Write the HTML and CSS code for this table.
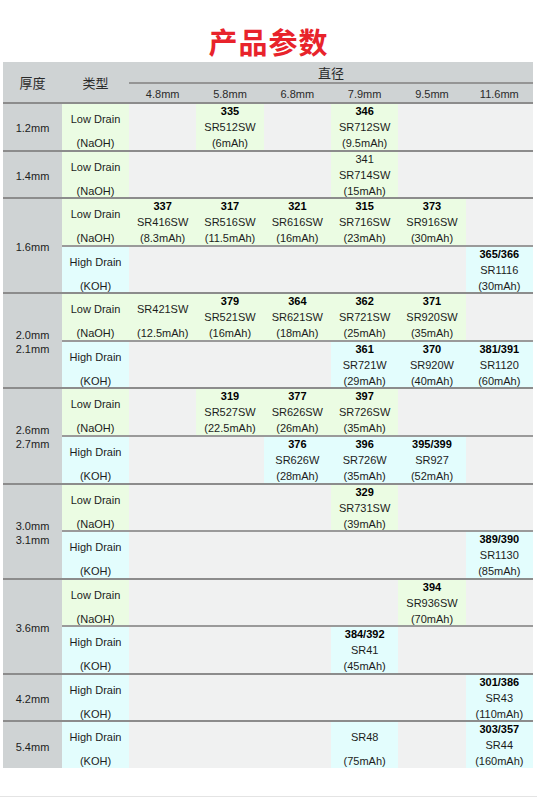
FILE: index.html
```html
<!DOCTYPE html>
<html lang="zh">
<head>
<meta charset="utf-8">
<title>产品参数</title>
<link rel="stylesheet" href="styles.css">
</head>
<body>
<h1 class="title">产品参数</h1>
<div class="grid">
  <div class="h h-thick">厚度</div>
  <div class="h h-type">类型</div>
  <div class="h h-dia">直径</div>
  <div class="h sub">4.8mm</div>
  <div class="h sub">5.8mm</div>
  <div class="h sub">6.8mm</div>
  <div class="h sub">7.9mm</div>
  <div class="h sub">9.5mm</div>
  <div class="h sub">11.6mm</div>

  <!-- 1.2mm -->
  <div class="th r1"><span>1.2mm</span></div>
  <div class="c type low"><div class="two"><span>Low Drain</span><span>(NaOH)</span></div></div>
  <div class="c"></div>
  <div class="c low"><div class="three"><b>335</b><span>SR512SW</span><span>(6mAh)</span></div></div>
  <div class="c"></div>
  <div class="c low"><div class="three"><b>346</b><span>SR712SW</span><span>(9.5mAh)</span></div></div>
  <div class="c"></div>
  <div class="c"></div>

  <!-- 1.4mm -->
  <div class="th r1"><span>1.4mm</span></div>
  <div class="c type low"><div class="two"><span>Low Drain</span><span>(NaOH)</span></div></div>
  <div class="c"></div>
  <div class="c"></div>
  <div class="c"></div>
  <div class="c low"><div class="three"><span>341</span><span>SR714SW</span><span>(15mAh)</span></div></div>
  <div class="c"></div>
  <div class="c"></div>

  <!-- 1.6mm -->
  <div class="th r2"><span>1.6mm</span></div>
  <div class="c type low"><div class="two"><span>Low Drain</span><span>(NaOH)</span></div></div>
  <div class="c low"><div class="three"><b>337</b><span>SR416SW</span><span>(8.3mAh)</span></div></div>
  <div class="c low"><div class="three"><b>317</b><span>SR516SW</span><span>(11.5mAh)</span></div></div>
  <div class="c low"><div class="three"><b>321</b><span>SR616SW</span><span>(16mAh)</span></div></div>
  <div class="c low"><div class="three"><b>315</b><span>SR716SW</span><span>(23mAh)</span></div></div>
  <div class="c low"><div class="three"><b>373</b><span>SR916SW</span><span>(30mAh)</span></div></div>
  <div class="c"></div>
  <div class="c sr type high"><div class="two"><span>High Drain</span><span>(KOH)</span></div></div>
  <div class="c sr"></div>
  <div class="c sr"></div>
  <div class="c sr"></div>
  <div class="c sr"></div>
  <div class="c sr"></div>
  <div class="c sr high"><div class="three"><b>365/366</b><span>SR1116</span><span>(30mAh)</span></div></div>

  <!-- 2.0/2.1mm -->
  <div class="th r2"><span>2.0mm<br>2.1mm</span></div>
  <div class="c type low"><div class="two"><span>Low Drain</span><span>(NaOH)</span></div></div>
  <div class="c low"><div class="two"><span>SR421SW</span><span>(12.5mAh)</span></div></div>
  <div class="c low"><div class="three"><b>379</b><span>SR521SW</span><span>(16mAh)</span></div></div>
  <div class="c low"><div class="three"><b>364</b><span>SR621SW</span><span>(18mAh)</span></div></div>
  <div class="c low"><div class="three"><b>362</b><span>SR721SW</span><span>(25mAh)</span></div></div>
  <div class="c low"><div class="three"><b>371</b><span>SR920SW</span><span>(35mAh)</span></div></div>
  <div class="c"></div>
  <div class="c sr type high"><div class="two"><span>High Drain</span><span>(KOH)</span></div></div>
  <div class="c sr"></div>
  <div class="c sr"></div>
  <div class="c sr"></div>
  <div class="c sr high"><div class="three"><b>361</b><span>SR721W</span><span>(29mAh)</span></div></div>
  <div class="c sr high"><div class="three"><b>370</b><span>SR920W</span><span>(40mAh)</span></div></div>
  <div class="c sr high"><div class="three"><b>381/391</b><span>SR1120</span><span>(60mAh)</span></div></div>

  <!-- 2.6/2.7mm -->
  <div class="th r2"><span>2.6mm<br>2.7mm</span></div>
  <div class="c type low"><div class="two"><span>Low Drain</span><span>(NaOH)</span></div></div>
  <div class="c"></div>
  <div class="c low"><div class="three"><b>319</b><span>SR527SW</span><span>(22.5mAh)</span></div></div>
  <div class="c low"><div class="three"><b>377</b><span>SR626SW</span><span>(26mAh)</span></div></div>
  <div class="c low"><div class="three"><b>397</b><span>SR726SW</span><span>(35mAh)</span></div></div>
  <div class="c"></div>
  <div class="c"></div>
  <div class="c sr type high"><div class="two"><span>High Drain</span><span>(KOH)</span></div></div>
  <div class="c sr"></div>
  <div class="c sr"></div>
  <div class="c sr high"><div class="three"><b>376</b><span>SR626W</span><span>(28mAh)</span></div></div>
  <div class="c sr high"><div class="three"><b>396</b><span>SR726W</span><span>(35mAh)</span></div></div>
  <div class="c sr high"><div class="three"><b>395/399</b><span>SR927</span><span>(52mAh)</span></div></div>
  <div class="c sr"></div>

  <!-- 3.0/3.1mm -->
  <div class="th r2"><span>3.0mm<br>3.1mm</span></div>
  <div class="c type low"><div class="two"><span>Low Drain</span><span>(NaOH)</span></div></div>
  <div class="c"></div>
  <div class="c"></div>
  <div class="c"></div>
  <div class="c low"><div class="three"><b>329</b><span>SR731SW</span><span>(39mAh)</span></div></div>
  <div class="c"></div>
  <div class="c"></div>
  <div class="c sr type high"><div class="two"><span>High Drain</span><span>(KOH)</span></div></div>
  <div class="c sr"></div>
  <div class="c sr"></div>
  <div class="c sr"></div>
  <div class="c sr"></div>
  <div class="c sr"></div>
  <div class="c sr high"><div class="three"><b>389/390</b><span>SR1130</span><span>(85mAh)</span></div></div>

  <!-- 3.6mm -->
  <div class="th r2"><span>3.6mm</span></div>
  <div class="c type low"><div class="two"><span>Low Drain</span><span>(NaOH)</span></div></div>
  <div class="c"></div>
  <div class="c"></div>
  <div class="c"></div>
  <div class="c"></div>
  <div class="c low"><div class="three"><b>394</b><span>SR936SW</span><span>(70mAh)</span></div></div>
  <div class="c"></div>
  <div class="c sr type high"><div class="two"><span>High Drain</span><span>(KOH)</span></div></div>
  <div class="c sr"></div>
  <div class="c sr"></div>
  <div class="c sr"></div>
  <div class="c sr high"><div class="three"><b>384/392</b><span>SR41</span><span>(45mAh)</span></div></div>
  <div class="c sr"></div>
  <div class="c sr"></div>

  <!-- 4.2mm -->
  <div class="th r1"><span>4.2mm</span></div>
  <div class="c type high"><div class="two"><span>High Drain</span><span>(KOH)</span></div></div>
  <div class="c"></div>
  <div class="c"></div>
  <div class="c"></div>
  <div class="c"></div>
  <div class="c"></div>
  <div class="c high"><div class="three"><b>301/386</b><span>SR43</span><span>(110mAh)</span></div></div>

  <!-- 5.4mm -->
  <div class="th r1"><span>5.4mm</span></div>
  <div class="c type high"><div class="two"><span>High Drain</span><span>(KOH)</span></div></div>
  <div class="c"></div>
  <div class="c"></div>
  <div class="c"></div>
  <div class="c high"><div class="two"><span>SR48</span><span>(75mAh)</span></div></div>
  <div class="c"></div>
  <div class="c high"><div class="three"><b>303/357</b><span>SR44</span><span>(160mAh)</span></div></div>
</div>
<div class="foot"></div>
</body>
</html>
```

FILE: styles.css
```css
html, body {
  margin: 0;
  padding: 0;
  background: #ffffff;
}

body {
  width: 537px;
  font-family: "Liberation Sans", Arial, "Noto Sans CJK SC", sans-serif;
  color: #1c1c1c;
}

.title {
  margin: 0;
  padding: 26px 0 6px;
  height: 30px;
  line-height: 30px;
  font-size: 29px;
  font-weight: 700;
  text-align: center;
  color: #e8232b;
  font-family: "Noto Sans CJK SC", sans-serif;
  letter-spacing: 1px;
}

.grid {
  margin-left: 3px;
  width: 530px;
  display: grid;
  grid-template-columns: 59px 67px repeat(6, 67.33px);
  grid-template-rows: 22px 18px repeat(14, 47.57px);
  background: #f0f1f1;
}

.h {
  background: #cfd3d4;
  box-sizing: border-box;
  display: flex;
  align-items: center;
  justify-content: center;
  color: #2a2a2a;
}

.h-thick, .h-type {
  grid-row: span 2;
  font-family: "Noto Sans CJK SC", sans-serif;
  font-size: 13px;
  padding-top: 1px;
}

.h-dia {
  grid-column: span 6;
  font-family: "Noto Sans CJK SC", sans-serif;
  font-size: 13px;
  border-bottom: 2px solid #959595;
}

.sub {
  font-size: 11px;
  padding-top: 2px;
}

.th {
  background: #cfd3d4;
  box-sizing: border-box;
  border-top: 2px solid #8c8c8c;
  display: flex;
  align-items: center;
  justify-content: center;
  text-align: center;
  font-size: 11px;
  line-height: 14px;
  padding-top: 3px;
  color: #1c1c1c;
}

.r1 { grid-row: span 1; }
.r2 { grid-row: span 2; }

.c {
  box-sizing: border-box;
  border-top: 2px solid #8c8c8c;
  background: #f0f1f1;
  font-size: 11px;
  text-align: center;
  overflow: visible;
  min-height: 0;
}

.c.sr {
  border-top-color: #9a9a9a;
}

.c.low { background: #ebfce3; }
.c.high { background: #e3fdfd; }

.two, .three {
  height: 40px;
  display: flex;
  flex-direction: column;
  align-items: center;
  white-space: nowrap;
}

.two {
  padding-top: 7px;
  line-height: 16px;
  gap: 8px;
}

.three {
  margin-top: -1px;
  line-height: 16px;
}

.three b {
  font-weight: 700;
  color: #000;
}

.type {
  color: #1c1c1c;
}

.foot {
  margin-top: 28px;
  height: 0;
  border-top: 1px solid #e4e4e4;
}
```
